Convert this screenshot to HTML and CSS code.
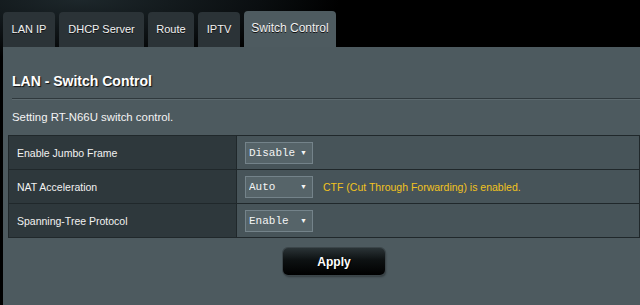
FILE: index.html
```html
<!DOCTYPE html>
<html>
<head>
<meta charset="utf-8">
<link rel="stylesheet" href="styles.css">
</head>
<body>
<div class="page">
  <div class="tabs">
    <div class="tab t-lanip">LAN IP</div>
    <div class="tab t-dhcp">DHCP Server</div>
    <div class="tab t-route">Route</div>
    <div class="tab t-iptv">IPTV</div>
    <div class="tab t-switch active">Switch Control</div>
  </div>
  <div class="panel">
    <div class="title">LAN - Switch Control</div>
    <div class="desc">Setting RT-N66U switch control.</div>
    <table class="form">
      <tr>
        <th>Enable Jumbo Frame</th>
        <td><span class="sel"><select><option>Disable</option></select><span class="arrow">▼</span></span></td>
      </tr>
      <tr>
        <th>NAT Acceleration</th>
        <td><span class="sel"><select><option>Auto</option></select><span class="arrow">▼</span></span><span class="hint">CTF (Cut Through Forwarding) is enabled.</span></td>
      </tr>
      <tr>
        <th>Spanning-Tree Protocol</th>
        <td><span class="sel"><select><option>Enable</option></select><span class="arrow">▼</span></span></td>
      </tr>
    </table>
    <div class="actions"><button class="apply">Apply</button></div>
  </div>
</div>
</body>
</html>
```
FILE: styles.css
```css
html, body {
  margin: 0;
  padding: 0;
  background: #000;
  font-family: "Liberation Sans", Arial, sans-serif;
  color: #fff;
}
.page {
  width: 640px;
  height: 305px;
  overflow: hidden;
  background: radial-gradient(ellipse 260px 60px at 80px 0px, #1d272b 0%, #0a0e10 70%, #000 100%);
  display: flex;
  flex-direction: column;
}
.tabs {
  display: flex;
  align-items: flex-end;
  gap: 4px;
  height: 47px;
  padding-left: 3px;
  box-sizing: border-box;
}
.tab {
  height: 35px;
  line-height: 35px;
  background: #2b3337;
  border-radius: 4px 4px 0 0;
  font-size: 11px;
  text-align: center;
  color: #f2f2f2;
  text-shadow: 0 1px 0 #111;
}
.t-lanip { width: 52px; }
.t-dhcp { width: 85px; }
.t-route { width: 46px; }
.t-iptv { width: 42px; }
.t-switch { width: 92px; }
.tab.active {
  background: #4e5b60;
  height: 36px;
  line-height: 35px;
  font-size: 12px;
}
.panel {
  flex: 1;
  margin-left: 3px;
  background: #4d5a5f;
  padding-top: 25px;
}
.title {
  margin-left: 9px;
  padding-bottom: 8px;
  font-size: 14px;
  font-weight: bold;
  line-height: 18px;
  text-shadow: 1px 1px 1px #111;
  border-bottom: 1px solid #2f393d;
  box-shadow: 0 1px 0 #5c696e;
}
.desc {
  margin: 11px 0 0 9px;
  font-size: 11.4px;
  line-height: 14px;
  color: #f4f4f4;
}
.form {
  margin: 11px 0 0 5px;
  width: 632px;
  border-collapse: collapse;
  border: 1px solid #20282b;
}
.form tr {
  height: 34px;
}
.form th,
.form td {
  border: 1px solid #20282b;
  padding: 0;
  vertical-align: middle;
  font-weight: normal;
  text-align: left;
}
.form th {
  width: 219px;
  background: #2e383c;
  padding-left: 8px;
  font-size: 10.5px;
  color: #f2f2f2;
}
.form td {
  background: #475459;
  padding-left: 8px;
  font-size: 10.5px;
}
.sel {
  position: relative;
  display: inline-block;
  vertical-align: middle;
}
.sel select {
  appearance: none;
  -webkit-appearance: none;
  width: 68px;
  height: 22px;
  box-sizing: border-box;
  margin: 0;
  padding: 0 0 0 3px;
  background: #566469;
  border: 1px solid #74838a;
  border-radius: 0;
  color: #f4f4f4;
  font-family: "Liberation Mono", "Courier New", monospace;
  font-size: 11px;
  outline: none;
}
.arrow {
  position: absolute;
  right: 6px;
  top: 6px;
  font-size: 7px;
  line-height: 10px;
  color: #f4f4f4;
  pointer-events: none;
}
.hint {
  margin-left: 10px;
  color: #f2c31e;
  font-size: 10.5px;
  vertical-align: middle;
}
.actions {
  padding: 10px 0 0 280px;
}
.apply {
  width: 102px;
  height: 27px;
  border: none;
  border-radius: 5px;
  background: linear-gradient(#2a3336 0%, #0d1112 45%, #000 100%);
  box-shadow: 0 0 0 1px #3b4549, 1px 2px 2px rgba(0,0,0,0.35);
  color: #fff;
  font-family: "Liberation Sans", Arial, sans-serif;
  font-size: 12px;
  font-weight: bold;
  padding: 0;
  text-shadow: 1px 1px 0 #000;
}
```
